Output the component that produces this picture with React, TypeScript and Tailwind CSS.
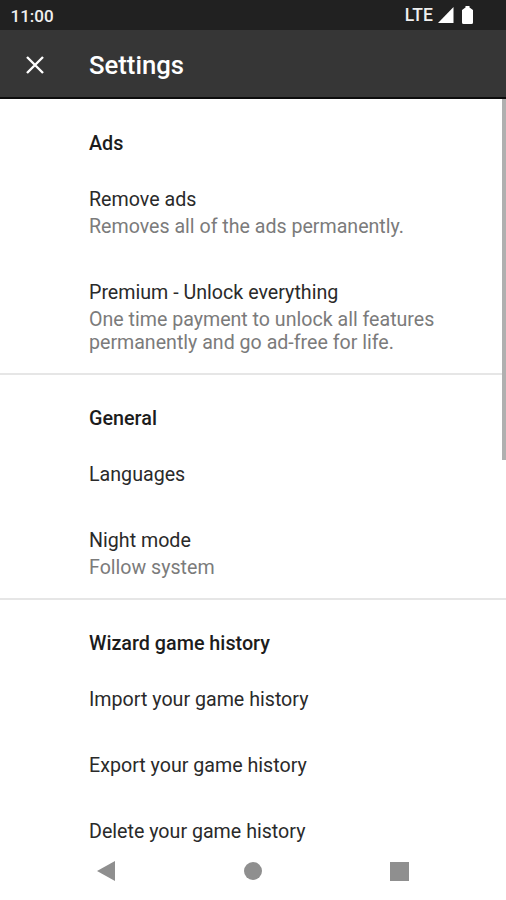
import * as React from 'react';

type SettingItem = {
  title: string;
  summary?: string[];
};

type SettingSection = {
  name: string;
  items: SettingItem[];
};

const sections: SettingSection[] = [
  {
    name: 'Ads',
    items: [
      { title: 'Remove ads', summary: ['Removes all of the ads permanently.'] },
      {
        title: 'Premium - Unlock everything',
        summary: ['One time payment to unlock all features', 'permanently and go ad-free for life.'],
      },
    ],
  },
  {
    name: 'General',
    items: [{ title: 'Languages' }, { title: 'Night mode', summary: ['Follow system'] }],
  },
  {
    name: 'Wizard game history',
    items: [
      { title: 'Import your game history' },
      { title: 'Export your game history' },
      { title: 'Delete your game history' },
    ],
  },
];

function StatusBar() {
  return (
    <div className="flex h-[30px] shrink-0 items-center bg-[#212121] pl-[10.5px] pr-[33px] text-[#f0f0f0]">
      <p className="flex-1 pt-[2px] text-[17px] font-medium leading-none">11:00</p>
      <p className="mr-[5px] pt-px text-[17.5px] font-medium leading-none tracking-[0.1px]">LTE</p>
      <svg className="mr-[8px]" width="16" height="16" viewBox="0 0 16 16" fill="white">
        <path d="M15.5 0v16H0z" />
      </svg>
      <svg width="11" height="18" viewBox="0 0 11 18" fill="white">
        <path d="M3.5 0h4v1.500L11 4v12.500q0 1.500-1.500 1.500h-8Q0 18 0 16.500V4l3.500-2.500z" />
      </svg>
    </div>
  );
}

function TopBar() {
  return (
    <div className="flex h-[69px] shrink-0 items-center border-b-2 border-[#0c0c0c] bg-[#363636] pl-[26px] pt-[2px] text-white">
      <svg width="18" height="18" viewBox="0 0 18 18" stroke="currentColor" strokeWidth="2.4">
        <path d="M1 1l16 16M17 1L1 17" />
      </svg>
      <h1 className="ml-[45px] pt-[2px] text-[25.7px] font-medium leading-none">Settings</h1>
    </div>
  );
}

function SettingRow({ item }: { item: SettingItem }) {
  return (
    <div className="pb-[20px] pt-[22px] last:pb-[18px]">
      <p className="text-[19.65px] leading-6 text-[#2a2a2a]">{item.title}</p>
      {item.summary && (
        <div className="pb-px pt-[3px] text-[19.6px] leading-[23px] text-[#7b7b7b]">
          {item.summary.map((line) => (
            <p key={line} className="whitespace-nowrap">
              {line}
            </p>
          ))}
        </div>
      )}
    </div>
  );
}

export default function App() {
  return (
    <div className="flex h-[900px] w-[506px] flex-col overflow-hidden bg-white font-[Roboto,sans-serif]">
      <StatusBar />
      <TopBar />
      <div className="relative h-[747px] shrink-0 overflow-hidden pt-px">
        {sections.map((section) => (
          <div key={section.name} className="border-b-2 border-[#e6e6e6] pl-[89px] last:border-b-0">
            <h2 className="pb-[10px] pt-[32px] text-[19.75px] font-medium leading-6 text-[#1c1c1c]">
              {section.name}
            </h2>
            <div>
              {section.items.map((item) => (
                <SettingRow key={item.title} item={item} />
              ))}
            </div>
          </div>
        ))}
        <div className="absolute right-0 top-0 h-[361px] w-[4.5px] bg-[#b0b0b0]" />
      </div>
      <div className="flex flex-1 items-center justify-between bg-white pb-[4px] pl-[97px] pr-[97px] text-[#8f8f8f]">
        <svg width="18" height="20" viewBox="0 0 18 20" fill="currentColor">
          <path d="M18 0v20L0 10z" />
        </svg>
        <div className="ml-px size-[18px] rounded-full bg-current" />
        <div className="size-[19px] bg-current" />
      </div>
    </div>
  );
}
